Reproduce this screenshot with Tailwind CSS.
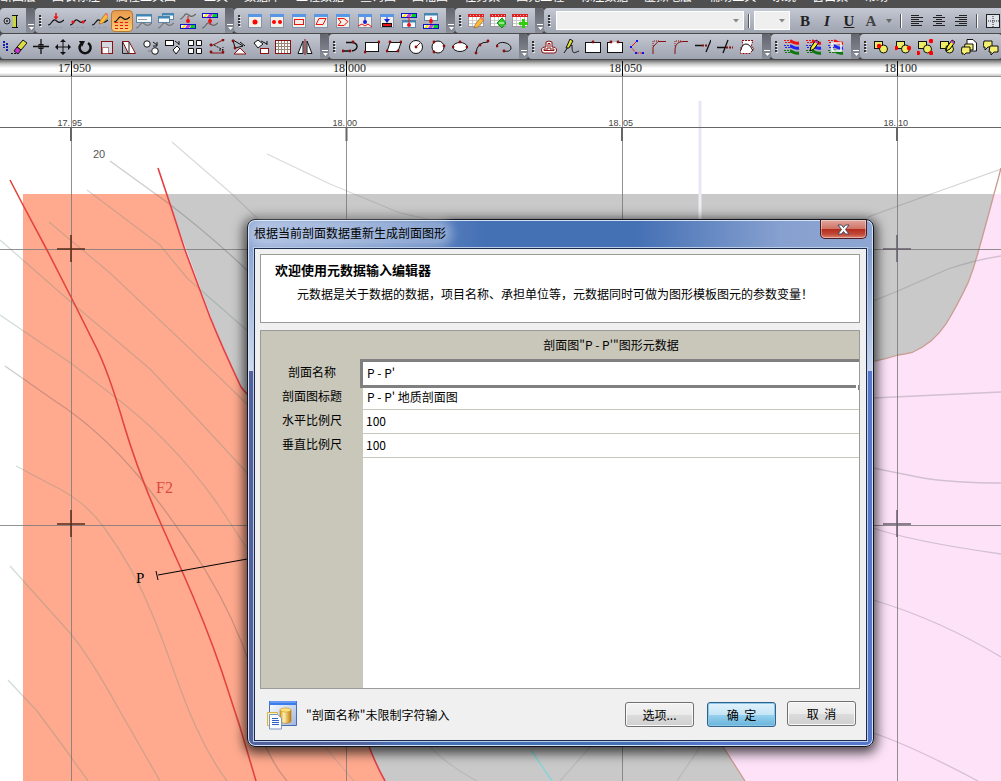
<!DOCTYPE html>
<html lang="zh-CN">
<head>
<meta charset="utf-8">
<title>剖面图元数据编辑</title>
<script src="https://cdn.jsdelivr.net/npm/@tailwindcss/browser@4"></script>
</head>
<body class="flex h-screen flex-col overflow-hidden bg-white font-['Liberation_Sans','Noto_Sans_CJK_SC',sans-serif] text-xs text-black">

<!-- Menu bar, scrolled mostly out of the window -->
<nav class="flex h-2 shrink-0 items-end gap-4 overflow-hidden bg-[#4f4f4f] pb-[5px] leading-3 whitespace-nowrap text-white">
  <a href="#">断图层</a><a href="#">图表标注</a><a href="#" class="pr-3">属性工具图</a><a href="#">工具</a><a href="#">数据库</a><a href="#">工程数据</a><a href="#">查询图</a><a href="#">图幅图</a><a href="#">任务集</a><a href="#">图元工程</a><a href="#">标注数据</a><a href="#">虚拟地层</a><a href="#">辅助工具</a><a href="#">系统</a><a href="#">窗口集</a><a href="#">帮助</a>
</nav>

<div class="flex shrink-0 flex-col gap-px bg-[#4a4a4a] pb-px">
  <div id="row1" role="toolbar" aria-label="剖面工具" class="flex h-[25px] overflow-hidden"></div>
  <div id="row2" role="toolbar" aria-label="绘图工具" class="flex h-[25px] overflow-hidden"></div>
</div>

<!-- Horizontal ruler -->
<div class="h-4 shrink-0 bg-[linear-gradient(#6e6e6e,#c8c8c8_25%,#fff_50%,#fff_80%,#c4c4c4)]">
  <svg class="block h-4 w-full font-['Liberation_Serif',serif]" viewBox="0 0 1001 16" preserveAspectRatio="xMinYMin slice" font-size="12" fill="#222">
    <g text-anchor="end"><text x="70" y="12">17</text><text x="345" y="12">18</text><text x="621" y="12">18</text><text x="896" y="12">18</text></g>
    <text x="73" y="12">950</text><text x="348" y="12">000</text><text x="624" y="12">050</text><text x="899" y="12">100</text>
    <path d="M71.500 1V16M346.500 1V16M622.500 1V16M897.500 1V16" stroke="#000"/>
  </svg>
</div>

<main class="relative min-h-0 flex-1 overflow-hidden">
  <!-- Geological map -->
  <svg class="absolute inset-0 h-full w-full" viewBox="0 76 1001 705" preserveAspectRatio="xMinYMin slice" fill="none" role="img" aria-label="地质平面图">
    <path d="M166 194H1001V781H380Z" fill="#c9c9c9"/>
    <path d="M23 194H167L185 250L210 317L227 355L241 387L260 425L370 749L384 781H23Z" fill="#ffaa8f"/>
    <path d="M1001 194H994Q988 217 979 249Q974 268 968 283Q957 306 946 324Q940 333 931 341Q922 348 913 352Q906 354 898 355Q886 359 875 361L700 700L722 745L745 781H1001Z" fill="#fde2f8"/>
    <path d="M1001 168Q998 180 994 194Q988 217 979 249Q974 268 968 283Q957 306 946 324Q940 333 931 341Q922 348 913 352Q906 354 898 355Q886 359 875 361M722 745L745 781" stroke="#c89c90" stroke-width="1.300"/>
    <path d="M700 101V194" stroke="#e8e6f5" stroke-width="3"/><path d="M700 194V220" stroke="#eeedf2" stroke-width="3"/>
    <g stroke="#6a8a7a" stroke-opacity=".3" stroke-width="1.300">
      <path d="M110 161L168 203Q210 235 250 273" stroke="#555"/>
      <path d="M172 142L232 194L258 219" stroke="#888"/>
      <path d="M267 154L330 184L400 213L440 222" stroke="#888"/>
      <path d="M87 190L160 245L187 278L250 333"/>
      <path d="M49 222L110 273L187 346L250 407"/>
      <path d="M0 240L72 303L150 369L200 422L250 476"/>
      <path d="M0 315L72 364L107 391Q170 437 217 503L250 553"/>
      <path d="M5 366L55 401Q100 430 140 478Q177 524 207 573Q235 620 250 665M266 747Q275 767 287 781" stroke="#555"/>
      <path d="M16 466L50 484Q84 500 103 526Q134 568 153 616C170 656 180 694 197 729Q210 758 227 781"/>
      <path d="M10 566L70 633Q90 657 117 706L160 781"/>
      <path d="M8 680L37 711L63 746L88 781"/>
      <path d="M868 217L898 206L934 193L1001 169M873 301L898 291L948 269Q975 260 1001 256" stroke="#777"/>
      <path d="M873 398L1001 392M873 468L923 478Q955 483 1001 483M873 528Q910 541 1001 554M873 600Q940 620 1001 657M873 733Q910 745 978 781" stroke="#707080"/>
      <path d="M325 747L354 781M430 747Q450 767 477 781M590 747L560 781M700 747L677 781" stroke="#999"/>
    </g>
    <path d="M531 750L552 781" stroke="#86d5d8" stroke-width="1.500"/>
    <g stroke="#777" stroke-opacity=".8">
      <path d="M71.500 76V781M346.500 76V781M622.500 76V781M897.500 76V781M0 249.500H1001M0 525.500H1001"/>
      <path d="M0 76.500H1001"/>
    </g>
    <path d="M0 127.500H1001" stroke="#666"/>
    <g stroke="#666" stroke-width="2"><path d="M71 128V141M346.500 128V141M622 128V141M897 128V141"/></g>
    <path d="M57 249H85M71 235V262M57 524H85M71 510V537" stroke="#5a2a1a" stroke-width="1.500"/>
    <path d="M883 249H911M897 235V262M883 524H911M897 510V537" stroke="#665d6b" stroke-width="1.500"/>
    <path d="M10 180L23 205L47 250L71 297L95 345Q108 370 124 425Q138 472 161 524L182 571Q206 625 222 672L240 727L256 781" stroke="#e2453d" stroke-width="1.600"/>
    <path d="M158 168L171 207L185 250L210 317Q222 347 241 387L252 400M368 744Q376 765 385 781" stroke="#e63e44" stroke-width="1.600"/>
    <path d="M158 575L250 558.500M156 571L158 580" stroke="#000"/>
    <g class="font-['Liberation_Sans',sans-serif]" font-size="9" fill="#444" text-anchor="end">
      <text x="70" y="126">17.</text><text x="345" y="126">18.</text><text x="621" y="126">18.</text><text x="896" y="126">18.</text>
      <g text-anchor="start"><text x="72" y="126">95</text><text x="347" y="126">00</text><text x="623" y="126">05</text><text x="898" y="126">10</text></g>
    </g>
    <text class="font-['Liberation_Sans',sans-serif]" x="93" y="158" font-size="11" fill="#555">20</text>
    <text class="font-['Liberation_Serif',serif]" x="156" y="493" font-size="16" fill="#dc4a42">F2</text>
    <text class="font-['Liberation_Serif',serif]" x="136" y="583" font-size="15" fill="#000">P</text>
  </svg>

  <!-- Metadata dialog window -->
  <form role="dialog" aria-labelledby="dlg-title" onsubmit="return false" class="absolute top-[143px] left-[247px] flex w-[627px] flex-col rounded-lg border border-[#10151f] px-1.5 pb-[5px] font-['Noto_Sans_CJK_SC',sans-serif] shadow-[0_3px_12px_3px_rgba(0,0,0,0.7),inset_0_0_0_1px_#d5e2f5] [background:linear-gradient(90deg,#91a9d6,#7f9ccf_15%,#4470b4_38%,#4470b4_62%,#86a0cf_85%,#8ea6d2)_0_0/100%_29px_no-repeat,linear-gradient(#8ea6d4,#b3c5e3_60%,#d0dcee)_0_29px/8px_122px_no-repeat,linear-gradient(#809dcc,#a9bedf_60%,#c5d4ec)_100%_29px/8px_122px_no-repeat,linear-gradient(90deg,#51629f_0%,#51629f_18%,#4470b4_25%,#4470b4_62%,#5577cc_75%)]">
    <div class="flex h-[28px] items-start justify-between">
      <h1 id="dlg-title" class="mt-[3px] rounded-full bg-white/30 pr-0.5 text-xs leading-5 shadow-[0_0_8px_5px_rgba(255,255,255,0.3)]">根据当前剖面数据重新生成剖面图形</h1>
      <button type="button" aria-label="关闭" class="flex h-[19px] w-[47px] items-center justify-center rounded-b-[5px] border border-t-0 border-[#4d1c22] bg-[linear-gradient(#e2a79e,#cf7467_48%,#b42c1c_52%,#c24a38_80%,#dc8474)] shadow-[inset_0_0_0_1px_rgba(255,255,255,0.4)]">
        <svg class="h-[11px] w-[13px]" viewBox="0 0 13 11"><path d="M1 1H4.500L6.500 3.500L8.500 1H12L8.500 5.500L12 10H8.500L6.500 7.500L4.500 10H1L4.500 5.500Z" fill="#fff" stroke="#454a60"/></svg>
      </button>
    </div>
    <div class="flex flex-col border border-[#1d2b4e] bg-[#f0f0f0] pt-[5px] pr-1.5 pl-[5px] outline outline-[#bccdea]">
      <section class="h-[69px] border border-[#9a9a9a] bg-white px-3.5 pt-[5px]">
        <h2 class="text-[13px] leading-5 font-bold">欢迎使用元数据输入编辑器</h2>
        <p class="pt-1 pl-[22px] leading-5 whitespace-nowrap">元数据是关于数据的数据，项目名称、承担单位等，元数据同时可做为图形模板图元的参数变量！</p>
      </section>
      <section class="relative mt-[7px] h-[359px] overflow-hidden border border-[#9a9a9a] bg-[linear-gradient(90deg,#c9c7ba_102px,#fff_102px)]">
        <table class="w-full table-fixed border-collapse">
          <colgroup><col class="w-[102px]"><col></colgroup>
          <thead><tr class="h-[31px] bg-[#c9c7ba]"><td></td><th class="pt-0 pb-1 font-normal">剖面图"P - P'"图形元数据</th></tr></thead>
          <tbody>
            <tr class="h-6"><th class="p-0 pb-1 font-normal"><label for="f1">剖面名称</label></th><td class="p-0 align-top"><div class="h-6 border-b border-[#c9c7ba]"><input id="f1" value="P - P'" class="relative z-10 block h-[23px] w-full bg-white px-1 pb-0.5 outline-3 outline-[#808080]"></div></td></tr>
            <tr class="h-6"><th class="p-0 pb-1 font-normal"><label for="f2">剖面图标题</label></th><td class="p-0 align-top"><div class="h-6 border-b border-[#c9c7ba]"><input id="f2" value="P - P' 地质剖面图" class="block h-[23px] w-full bg-white px-1 pb-0.5 outline-none"></div></td></tr>
            <tr class="h-6"><th class="p-0 pb-1 font-normal"><label for="f3">水平比例尺</label></th><td class="p-0 align-top"><div class="h-6 border-b border-[#c9c7ba]"><input id="f3" value="100" class="block h-[23px] w-full bg-white px-[3px] pb-0.5 outline-none"></div></td></tr>
            <tr class="h-6"><th class="p-0 pb-1 font-normal"><label for="f4">垂直比例尺</label></th><td class="p-0 align-top"><div class="h-6 border-b border-[#c9c7ba]"><input id="f4" value="100" class="block h-[23px] w-full bg-white px-[3px] pb-0.5 outline-none"></div></td></tr>
          </tbody>
        </table>
        <span class="absolute top-[54px] right-0 z-20 h-[5px] w-[3px] border-r border-[#808080] bg-white"></span>
      </section>
      <footer class="flex h-[51px] items-center pr-1 pl-1.5">
        <svg class="h-[30px] w-[32px]" viewBox="0 0 32 30" aria-hidden="true">
          <defs><linearGradient id="win" x2="1" y2="1"><stop stop-color="#fff"/><stop offset="1" stop-color="#9fb4dc"/></linearGradient><linearGradient id="cyl"><stop stop-color="#d69a1c"/><stop offset=".35" stop-color="#fff2b0"/><stop offset="1" stop-color="#c47a06"/></linearGradient></defs>
          <path d="M3.500 1.500H30.500V25.500H3.500Z" fill="url(#win)" stroke="#4a6cb3"/><path d="M3 1H31V5H3Z" fill="#3c7bea"/><path d="M4 2H30" stroke="#8fb7ff"/>
          <path d="M1.500 12.500H11.500V25.500H1.500Z" fill="#fff4b8" stroke="#d3b54c"/>
          <path d="M14 10V21C14 24 25 24 25 21V10Z" fill="url(#cyl)" stroke="#b27a10" stroke-width=".6"/><ellipse cx="19.500" cy="10" rx="5.500" ry="2" fill="#ffe27c" stroke="#c28f1e" stroke-width=".6"/>
          <path d="M3.500 14.500H11.500L15.500 18V29H3.500Z" fill="#fafcff" stroke="#7b95c4"/><path d="M6 18.500H12M6 20.500H13M6 22.500H13M6 24.500H13" stroke="#2f62c4"/>
        </svg>
        <p class="ml-2 flex-1">"剖面名称"未限制字符输入</p>
        <button type="button" class="mr-[13px] h-[25px] w-[69px] rounded-[3px] border border-[#707070] bg-[linear-gradient(#f3f3f3,#ebebeb_50%,#dcdcdc_52%,#cfcfcf)] shadow-[inset_0_0_0_1px_#fafafa]">选项...</button>
        <button type="submit" class="mr-[11px] h-[25px] w-[69px] rounded-[3px] border border-[#2c628b] bg-[linear-gradient(#e3f3fc,#c4e5f6_50%,#98d1ef_52%,#68b3db)] shadow-[inset_0_0_0_1px_#8fc8e6]">确&nbsp; 定</button>
        <button type="button" class="mb-0.5 h-[25px] w-[69px] rounded-[3px] border border-[#707070] bg-[linear-gradient(#f3f3f3,#ebebeb_50%,#dcdcdc_52%,#cfcfcf)] shadow-[inset_0_0_0_1px_#fafafa]">取&nbsp; 消</button>
      </footer>
    </div>
  </form>
</main>

<script>
// Shared icon fragments, all drawn on a 16x16 grid.
const wave = (c, y = 0) => `<path transform="translate(0 ${y})" d="M0 12C4 12 4 6 7 7S10 12 16 7" stroke="${c}" stroke-width="1.200"/>`;
const dash = (c, y) => `<path d="M1 ${y}.500H15" stroke="${c}" stroke-dasharray="3 2"/>`;
const win = (x, y, w, h) => `<rect x="${x + .5}" y="${y + .5}" width="${w - 1}" height="${h - 1}" fill="#f7fbff" stroke="#5a86a8"/><path d="M${x} ${y + 1.5}h${w}" stroke="#3f86b4" stroke-width="2"/>`;
const bar = y => `<rect x=".5" y="${y + .5}" width="15" height="4" fill="#fff" stroke="#11c"/><path d="M1 ${y + 4}L4 ${y + 1}H6L4 ${y + 4}Z" fill="#ee0"/><path d="M5 ${y + 4}L7 ${y + 1}H11L9 ${y + 4}Z" fill="#c4c"/><path d="M10 ${y + 4}L11 ${y + 1}H15V${y + 4}Z" fill="#0c2"/>`;
const panel = s => `<rect x="1.500" y="1.500" width="13" height="13" fill="#f2efe6" stroke="#8494ac"/><path d="M1 2.500H15" stroke="#5a96e6" stroke-width="3"/>${s}`;
const grid = s => `<rect x=".5" y="1.500" width="15" height="12" fill="#fff" stroke="#999"/><path d="M1 7.500H15M1 10.500H15M4.500 4V13M8.500 4V13M12.500 4V13" stroke="#ccc"/><path d="M0 2.500H16" stroke="#d22" stroke-width="3"/><path d="M2 2.500H15" stroke="#fbb" stroke-dasharray="1 2"/>${s}`;
const dots = (...p) => p.map(([x, y]) => `<circle cx="${x}" cy="${y}" r="1.400" fill="#8a1010"/>`).join('');
const red = (...p) => p.map(([x, y]) => `<circle cx="${x}" cy="${y}" r="2.200" fill="#f00"/>`).join('');
const pencil = '<path d="M6 9L12 1L15 4L9 11L5 12Z" fill="#fb3" stroke="#963" stroke-width=".7"/><path d="M11 2L14 5L15 3L13 1Z" fill="#e77"/>';
const pen = '<path d="M4 12L5 8L10 1L13 3L8 10Z" fill="#ee3" stroke="#000"/><path d="M9 2L12 4" stroke="#b3c" stroke-width="2"/>';
const brushes = [['#e11', 1], ['#22e', 6], ['#171', 11]].map(([c, y]) => `<path d="M6 ${y + 1}C9 ${y + 1} 9 ${y + 4} 15 ${y + 3}" stroke="${c}" stroke-width="3"/><path d="M0 ${y + .5}H9M1 ${y + 2.5}H8" stroke="${c}" stroke-dasharray="2 1"/>`).join('');
const shapes = '<rect x="1.500" y="2.500" width="8" height="7" fill="#ee6" stroke="#111"/><circle cx="10.500" cy="10" r="4" fill="#ee6" stroke="#111"/>';
const bubble = (x, y) => `<path d="M${x} ${y}h8v6h-4l-3 3v-3h-2z" fill="#f5ef70" stroke="#111"/>`;

const row1 = [
  { head: 0, icons: [
    ['标尺', '<circle cx="4" cy="8" r="3" stroke="#222"/><circle cx="4" cy="8" r="1" fill="#222"/><path d="M11.500 3V14" stroke="#ccd733" stroke-width="3"/><path d="M9 2.500H15M9 14.500H15M13.500 3V14" stroke="#111"/>'] ] },
  { icons: [
    ['插入节点', wave('#111') + dash('#99a', 14) + '<path d="M8 0V6" stroke="#e11" stroke-width="1.500"/><path d="M5.500 3.500H10.500L8 7Z" fill="#e11"/>'],
    ['移动节点', wave('#111') + dash('#99a', 14) + '<circle cx="3" cy="9" r="1.600" fill="#e11"/><circle cx="13" cy="9" r="1.600" fill="#e11"/>'],
    ['编辑曲线', wave('#111') + dash('#99a', 14) + '<g transform="translate(2 -1)">' + pencil + '</g>'],
    ['地层曲线', wave('#111', -3) + dash('#e11', 9) + dash('#e11', 12) + dash('#e11', 15), 1],
    ['属性窗口', win(0, 1, 16, 9) + '<path d="M2 6.500H11" stroke="#999"/>' + wave('#777', 3)],
    ['层叠窗口', win(4, 0, 12, 7) + win(0, 3, 12, 7) + wave('#777', 3)],
    ['向下填充', wave('#666', -6) + bar(11) + '<path d="M8 3V10" stroke="#e11"/><circle cx="8" cy="8" r="2" fill="#e11"/>'],
    ['向上填充', bar(0) + wave('#666', 3) + '<path d="M8 5V12" stroke="#e11"/><circle cx="8" cy="8" r="2" fill="#e11"/>'] ] },
  { icons: [
    ['单点', panel('<circle cx="8" cy="9" r="2.500" fill="#f00"/>')],
    ['双点', panel('<circle cx="5" cy="9" r="2" fill="#f00"/><circle cx="11" cy="9" r="2" fill="#f00"/>')],
    ['矩形区', panel('<rect x="3.500" y="6.500" width="9" height="5" stroke="#e11"/>')],
    ['平行区', panel('<path d="M6 5.500H13L10 11.500H3Z" stroke="#e11"/>')],
    ['多边区', panel('<path d="M3 5.500H9L13 8.500L9 12.500H3L6 9Z" stroke="#e11"/>')],
    ['投影线', panel('<path d="M1 13L5 11L8 13L11 11L15 14" stroke="#e11"/><path d="M8 4V10" stroke="#12d"/><circle cx="8" cy="9" r="2" fill="#12d"/>')],
    ['投影面', panel('<rect x="3.500" y="10.500" width="9" height="3" fill="#e11" stroke="#111"/><path d="M8 4V9" stroke="#12d"/><path d="M5 6H11L8 10Z" fill="#12d"/>')],
    ['上层', bar(0) + win(1, 7, 14, 8) + '<path d="M8 4V13" stroke="#e11"/><circle cx="8" cy="12" r="2" fill="#e11"/>'],
    ['下层', win(1, 0, 14, 8) + bar(11) + '<path d="M8 4V11" stroke="#e11"/><circle cx="8" cy="8" r="2" fill="#e11"/>'] ] },
  { icons: [
    ['编辑表', grid('<g transform="translate(1 3)">' + pencil + '</g>')],
    ['导入表', grid('<path d="M7 10L12 5L16 10L12 15Z" fill="#3c2" stroke="#182"/><path d="M9 10H14" stroke="#fff"/>')],
    ['添加表', grid('<path d="M11.500 6V15M7 10.500H16" stroke="#3c1" stroke-width="3"/>')] ] }
];

const row2 = [
  { head: 0, icons: [
    ['选择', '<path d="M12 2V9M15 4V13" stroke="#12a" stroke-dasharray="2 1" stroke-width="2"/>', 2],
    ['橡皮', '<path d="M6 8L12 1L16 4L10 11Z" fill="#dd4" stroke="#111"/><path d="M6 8L10 11L7 15L3 12Z" fill="#c3c" stroke="#111"/><path d="M0 14.500H2M3 14.500H5" stroke="#111"/>'],
    ['十字', '<path d="M8 0V15M0 7.500H16" stroke="#111" stroke-width="1.300"/><rect x="6" y="5.500" width="4" height="4" stroke="#111"/>'],
    ['移动', '<path d="M8 2V14M2 8H14" stroke="#111"/><path d="M8 0L11 3H5ZM8 16L11 13H5ZM0 8L3 5V11ZM16 8L13 5V11Z" fill="#111"/>'],
    ['旋转', '<path d="M4 5A5.500 5.500 0 1 0 11 4" stroke="#111" stroke-width="2.500"/><path d="M2 2L8 2L5 8Z" fill="#111"/>'],
    ['缩放', '<rect x="2.500" y="2.500" width="11" height="12" stroke="#811" fill="#d4d8e0"/><rect x="3.500" y="8.500" width="6" height="6" fill="#fff" stroke="#811" stroke-dasharray="1 1"/>'],
    ['倾斜', '<path d="M1.500 2.500H8L14.500 14.500H7.500Z" stroke="#811" fill="#fff"/><path d="M1.500 2.500V14.500H8M8 3V14" stroke="#222"/>'],
    ['复制圆', '<circle cx="4" cy="5" r="3.200" fill="#fff" stroke="#111"/><circle cx="12" cy="12" r="3.300" fill="#fff" stroke="#111"/><path d="M5 12A4 4 0 0 0 10 9" stroke="#777"/><path d="M10 3L14 6M14 3V7H10" stroke="#111"/>'],
    ['复制块', '<rect x=".5" y="1.500" width="8" height="5" fill="#fff" stroke="#111"/><path d="M8 11L12 7L15 10L11 15Z" fill="#fff" stroke="#111"/><path d="M10 2L14 5M14 2V6" stroke="#111"/>'],
    ['阵列', '<path d="M1.500 1.500h5v5h-5zM9.500 1.500h5v5h-5zM1.500 9.500h5v5h-5zM9.500 9.500h5v5h-5z" fill="#fff" stroke="#111"/>'],
    ['偏移', '<path d="M2 7L14 1M2 14H15" stroke="#811"/><path d="M5 6L14 11M10 11H14V8" stroke="#111" stroke-dasharray="2 1"/>' + dots([2, 6], [14, 1], [2, 13], [14, 13])],
    ['对齐', '<path d="M2 1L4 9L12 7Z" stroke="#111"/><path d="M3 15H15L9 9Z" fill="#fff" stroke="#811"/><path d="M9 3L14 7" stroke="#111"/>' + dots([2, 2], [4, 9])],
    ['变换', '<path d="M1 4L5 1L10 5L5 9Z" fill="#fff" stroke="#111"/><rect x="7.500" y="9.500" width="8" height="5" fill="#fff" stroke="#811"/><path d="M8 2L14 5M14 2V6" stroke="#111"/>'],
    ['网格', '<rect x=".5" y="1.500" width="15" height="13" fill="#fff" stroke="#811"/><path d="M3.500 2V14M6.500 2V14M9.500 2V14M12.500 2V14M1 4.500H15M1 7.500H15M1 10.500H15" stroke="#987"/>'],
    ['镜像', '<path d="M6 2V14.500H1ZM10 2V14.500H15Z" fill="#fff" stroke="#111"/><path d="M8 0V16" stroke="#811"/>'] ] },
  { icons: [
    ['多段线', '<path d="M1 12H8M4 3.500H11C17 5 16 11 10 12" stroke="#111" stroke-width="1.300"/>' + dots([1, 12], [8, 12], [11, 3])],
    ['矩形', '<rect x="1.500" y="3.500" width="13" height="9" fill="#fff" stroke="#111"/>' + dots([1, 13], [15, 3])],
    ['平行四边形', '<path d="M4 3.500H15L12 12.500H1Z" fill="#fff" stroke="#111"/>' + dots([4, 3], [15, 3], [12, 12], [1, 12])],
    ['圆心圆', '<circle cx="8" cy="8" r="6.500" fill="#fff" stroke="#111"/><path d="M8 8L12 4" stroke="#811"/>' + dots([8, 8])],
    ['三点圆', '<circle cx="8" cy="8" r="6" fill="#fff" stroke="#111"/>' + dots([4, 3], [14, 7], [4, 13])],
    ['椭圆', '<ellipse cx="8" cy="8" rx="7" ry="4.500" fill="#fff" stroke="#111"/>' + dots([1, 8], [15, 8], [8, 3])],
    ['圆弧', '<path d="M2 14Q3 3 14 3" stroke="#111"/>' + dots([2, 14], [6, 6], [14, 2])],
    ['曲线', '<path d="M1 6C4 1 15 4 15 9C15 12 11 13 8 12" stroke="#111"/>' + dots([1, 7], [8, 12])] ] },
  { icons: [
    ['面注记', '<path d="M5 8V3Q8 1 11 3V8Q15.500 8 15.500 11T13 14H3Q.5 14 .5 11T5 8Z" fill="#fff" stroke="#811"/><path d="M3 11.500H13V10H9V4.500H7V10H3Z" stroke="#811"/>'],
    ['画线', '<path d="M1 14L5 8L9 6C9 16 11 14 16 12" stroke="#111"/><path d="M3 9L7 0L10 2L6 9Z" fill="#dd3" stroke="#111"/>'],
    ['断开', '<rect x=".5" y="3.500" width="15" height="10" fill="#fff" stroke="#111"/>' + dots([8, 3])],
    ['两点断开', '<rect x=".5" y="3.500" width="15" height="10" fill="#fff" stroke="#111"/><path d="M5 3.500H11" stroke="#eee"/>' + dots([4, 3], [11, 3])],
    ['节点', '<path d="M8 2L2 8" stroke="#e11"/><path d="M2 8L7 14H14" stroke="#e11" stroke-dasharray="2 1"/><path d="M7 1h2v2h-2zM1 7h2v2h-2zM6 13h2v2h-2zM13 13h2v2h-2z" fill="#11e"/>'],
    ['倒角', '<path d="M2 15V8L7 2.500H15" stroke="#811"/><path d="M2 7V2H8" stroke="#811" stroke-dasharray="1 1"/>'],
    ['圆角', '<path d="M2 15V10Q3 2.500 10 2.500H15" stroke="#811"/><path d="M2 7V2H8" stroke="#811" stroke-dasharray="1 1"/>'],
    ['延伸', '<path d="M0 6.500H7M11 13L16 1" stroke="#111" stroke-width="1.300"/><path d="M7 6.500H13" stroke="#811" stroke-dasharray="2 1" stroke-width="2"/>'],
    ['修剪', '<path d="M0 8.500H9M6 14L11 1" stroke="#111" stroke-width="1.300"/><path d="M9 8.500H16" stroke="#811" stroke-dasharray="2 1" stroke-width="2"/>'],
    ['裁剪', '<path d="M3 1.500H14L12 7.500L15 9L11 14.500H1.500V9L4 6Z" stroke="#811" fill="#fff" stroke-dasharray="2 1"/><path d="M2 11Q3 5 7 5T14 12" stroke="#111"/>'] ] },
  { icons: [
    ['样式刷', brushes],
    ['编辑样式', brushes + pen],
    ['选择样式', brushes + '<rect x="4" y="4" width="9" height="8" stroke="#fff" stroke-width="1.500"/>'] ] },
  { tail: 0, icons: [
    ['中心捕捉', shapes + red([6, 7])],
    ['两侧捕捉', shapes + red([1, 9], [14, 9])],
    ['角点捕捉', shapes + red([1, 14], [14, 2], [14, 14])],
    ['编辑图元', shapes + '<g transform="translate(3 0)">' + pen + '</g>'],
    ['复制图元', '<path d="M6 .500H12L15.500 4V12H6Z" fill="#fff" stroke="#111"/>' + bubble(4, 5) + bubble(1, 8)],
    ['粘贴图元', bubble(1, 2) + bubble(7, 7)] ] }
];

const button = ([name, art, mode]) => `<button type="button" aria-label="${name}" class="${
  mode === 1 ? 'flex h-[22px] w-[22px] shrink-0 items-center justify-center rounded-sm border border-[#b87a30] bg-[linear-gradient(#e79b4e,#f6b05a_50%,#fcd27a)]'
  : mode === 2 ? 'flex h-[22px] w-2 shrink-0 items-center justify-end overflow-hidden'
  : 'flex h-[22px] w-[22px] shrink-0 items-center justify-center'}"><svg class="h-4 w-4 shrink-0" viewBox="0 0 16 16" fill="none">${art}</svg></button>`;
const grip = '<span class="flex w-2.5 shrink-0 items-center justify-center"><svg class="h-3 w-1" viewBox="0 0 4 12"><path d="M1 0h2v2h-2zM1 3h2v2h-2zM1 6h2v2h-2zM1 9h2v2h-2z" fill="#333"/><path d="M2 2h2v1h-2zM2 5h2v1h-2zM2 8h2v1h-2zM2 11h2v1h-2z" fill="#eee"/></svg></span>';
const more = '<button type="button" aria-label="更多按钮" class="ml-1 flex w-[9px] shrink-0 items-end justify-center rounded-r bg-[linear-gradient(#62656d,#8c909a)] pb-0.5"><svg class="h-2 w-2" viewBox="0 0 8 8" fill="none"><path d="M1 1.500H7" stroke="#fff"/><path d="M2 4H7L4.500 7Z" fill="#fff"/></svg></button>';
const group = g => `<div class="flex shrink-0 items-stretch rounded bg-[linear-gradient(#c3c8d2,#b0b5c1_50%,#9fa4b1)]">${g.head === 0 ? '' : grip}<div class="flex items-center">${g.icons.map(button).join('')}</div>${g.tail === 0 ? '' : more}</div>`;
const sep = '<span class="mx-1 h-3.5 w-0.5 shrink-0 border-l border-[#555] bg-white"></span>';
const icon = (name, art) => button([name, art]);
const caret = '<svg class="pointer-events-none absolute right-1 h-1 w-2" viewBox="0 0 8 4"><path d="M1 0H7L4 3.500Z" fill="#888"/></svg>';
const format = `<div class="flex min-w-0 flex-1 items-center rounded-l bg-[linear-gradient(#c3c8d2,#b0b5c1_50%,#9fa4b1)]">${grip}
  <label class="relative ml-0.5 flex items-center"><select aria-label="字体" class="h-[19px] w-[188px] appearance-none border border-white bg-[#efefef]"><option></option></select>${caret}</label>${sep}
  <label class="relative flex items-center"><select aria-label="字号" class="h-[19px] w-9 appearance-none border border-white bg-[#efefef]"><option></option></select>${caret}</label>
  <div class="ml-1 flex items-center font-['Liberation_Serif',serif] text-[15px] leading-5 font-bold text-[#222]">
    <button type="button" aria-label="加粗" class="w-[22px]">B</button><button type="button" aria-label="斜体" class="w-[22px] italic">I</button><button type="button" aria-label="下划线" class="w-[22px] underline">U</button><button type="button" aria-label="字体颜色" class="w-[22px] text-[#444]">A</button>
  </div><svg class="mx-1 h-1 w-1.5 shrink-0" viewBox="0 0 6 4"><path d="M0 0H6L3 4Z" fill="#666"/></svg>${sep}
  ${icon('左对齐', '<path d="M2 2.500H10M2 4.500H14M2 6.500H10M2 8.500H14M2 10.500H10M2 12.500H13" stroke="#222"/>')}${icon('居中', '<path d="M5 2.500H11M2 4.500H14M5 6.500H11M2 8.500H14M5 10.500H11M2 12.500H14" stroke="#222"/>')}${icon('右对齐', '<path d="M6 2.500H14M2 4.500H14M6 6.500H14M2 8.500H14M6 10.500H14M2 12.500H14" stroke="#222"/>')}${sep}
  ${icon('边框', '<rect x="1.500" y="1.500" width="13" height="13" fill="#dfe3ea" stroke="#222"/><path d="M8 3V14M3 8H14" stroke="#222" stroke-dasharray="1 1"/>')}</div>`;
document.getElementById('row1').innerHTML = row1.map(group).join('') + format;
document.getElementById('row2').innerHTML = row2.map(group).join('');
</script>
</body>
</html>
